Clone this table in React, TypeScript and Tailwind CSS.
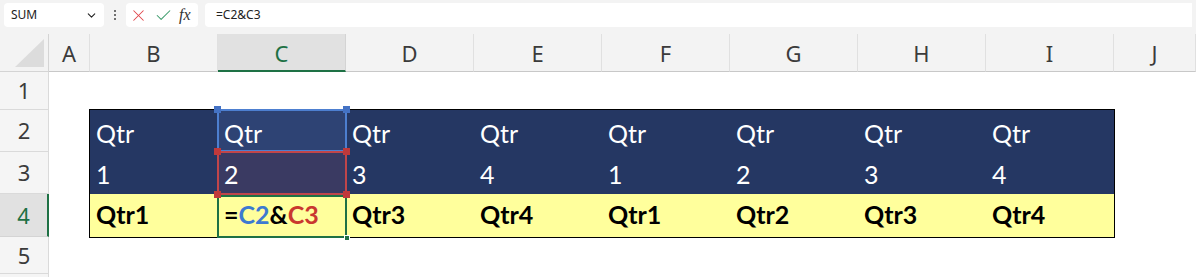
import { ChevronDown, X, Check } from "lucide-react"

const cols = ["A", "B", "C", "D", "E", "F", "G", "H", "I", "J"]
const heads = ["Qtr", "Qtr", "Qtr", "Qtr", "Qtr", "Qtr", "Qtr", "Qtr"]
const nums = ["1", "2", "3", "4", "1", "2", "3", "4"]
const results = ["Qtr1", "", "Qtr3", "Qtr4", "Qtr1", "Qtr2", "Qtr3", "Qtr4"]

const cellFont = { fontFamily: "Lato, 'Liberation Sans', sans-serif" }

function Handle({ className }: { className: string }) {
  return <span className={`absolute z-20 h-[7px] w-[7px] ${className}`} />
}

export default function App() {
  return (
    <div className="h-[277px] w-[1196px] overflow-hidden bg-white" style={{ fontFamily: "'Noto Sans', 'Open Sans', sans-serif" }}>
      {/* formula bar */}
      <div className="flex h-[34px] items-start gap-[7px] bg-[#f3f3f3] px-[4px] pt-[3px]">
        <div className="flex h-[24px] w-[100px] items-center justify-between rounded-[4px] bg-white pl-[7px] pr-[6px] text-[12px] text-[#222]">
          <span>SUM</span>
          <ChevronDown className="h-[13px] w-[13px]" strokeWidth={2} />
        </div>
        <div className="flex h-[24px] w-[8px] flex-col items-center justify-center gap-[2px]">
          <span className="h-[2px] w-[2px] rounded-full bg-[#444]" />
          <span className="h-[2px] w-[2px] rounded-full bg-[#444]" />
          <span className="h-[2px] w-[2px] rounded-full bg-[#444]" />
        </div>
        <div className="flex h-[24px] w-[72px] items-center gap-[6px] rounded-[4px] bg-white pl-[3px]">
          <X className="h-[19px] w-[19px] text-[#e0454a]" strokeWidth={1.3} />
          <Check className="h-[19px] w-[19px] text-[#3a9a6a]" strokeWidth={1.3} />
          <span className="text-[16px] italic text-[#333]" style={{ fontFamily: "'Liberation Serif', serif" }}>fx</span>
        </div>
        <div className="flex h-[24px] flex-1 items-center rounded-l-[4px] bg-white pl-[11px] text-[12px] text-[#222]">
          =C2&amp;C3
        </div>
      </div>

      {/* sheet */}
      <div className="grid grid-cols-[49px_41px_repeat(8,128px)_1fr] grid-rows-[38px_38px_42px_42px_43px_37px_40px]">
        {/* corner */}
        <div className="relative border-b border-r border-[#d4d4d4] bg-[#f3f3f3]">
          <div
            className="absolute bottom-[4px] right-[4px] h-[28px] w-[29px] bg-[#dcdcdc]"
            style={{ clipPath: "polygon(100% 0, 100% 100%, 0 100%)" }}
          />
        </div>
        {cols.map((c) => (
          <div
            key={c}
            className={`flex items-center justify-center border-r pt-[2px] text-[22px] ${
              c === "C"
                ? "border-b-2 border-b-[#1e7145] border-r-[#d4d4d4] bg-[#e1e1e1] text-[#1e7145]"
                : "border-b border-[#c8c8c8] border-r-[#e0e0e0] bg-[#f3f3f3] text-[#3b3b3b]"
            }`}
          >
            {c}
          </div>
        ))}

        {/* row headers */}
        {[1, 2, 3, 4, 5].map((r) => (
          <div
            key={r}
            style={{ gridColumn: 1, gridRow: r + 1 }}
            className={`flex items-center justify-center border-b text-[22px] ${
              r === 4
                ? "border-r-2 border-b-[#d4d4d4] border-r-[#1e7145] bg-[#e1e1e1] text-[#1e7145]"
                : "border-r border-[#dadada] bg-[#f5f5f5] text-[#3b3b3b]"
            }`}
          >
            {r}
          </div>
        ))}
        <div className="col-start-1 row-start-7 border-r border-[#dadada] bg-[#f5f5f5]" />

        {/* data table */}
        <div
          className="col-start-3 col-span-8 row-start-3 row-span-3 grid grid-cols-[repeat(8,128px)] grid-rows-[42px_42px_43px] outline outline-1 outline-black"
          style={cellFont}
        >
          {heads.map((h, i) => (
            <div
              key={"h" + i}
              className={`relative flex items-end pb-[6px] pl-[6px] text-[25px] leading-none text-white ${
                i === 1 ? "bg-[#2e4374]" : "bg-[#253763]"
              }`}
            >
              {h}
              {i === 1 && (
                <>
                  <div className="pointer-events-none absolute z-10 border-2 border-[#4d7fd0]" style={{ inset: "-1px -1px 0 -1px" }} />
                  <Handle className="-left-[4px] -top-[4px] bg-[#4472c4]" />
                  <Handle className="-right-[4px] -top-[4px] bg-[#4472c4]" />
                </>
              )}
            </div>
          ))}
          {nums.map((n, i) => (
            <div
              key={"n" + i}
              className={`relative flex items-end pb-[7px] pl-[6px] text-[25px] leading-none text-white ${
                i === 1 ? "bg-[#3a3a62]" : "bg-[#253763]"
              }`}
            >
              {n}
              {i === 1 && (
                <>
                  <div className="pointer-events-none absolute z-10 border-2 border-[#c0454a]" style={{ inset: "-1px -1px -1px -1px" }} />
                  <Handle className="-left-[4px] -top-[4px] bg-[#c0393b]" />
                  <Handle className="-right-[4px] -top-[4px] bg-[#c0393b]" />
                  <Handle className="-bottom-[4px] -left-[4px] bg-[#c0393b]" />
                  <Handle className="-bottom-[4px] -right-[4px] bg-[#c0393b]" />
                </>
              )}
            </div>
          ))}
          {results.map((t, i) => (
            <div
              key={"r" + i}
              className="relative flex items-end bg-[#ffff9c] pb-[10px] pl-[6px] text-[25px] font-bold leading-none text-black"
            >
              {i === 1 ? (
                <>
                  <span>=</span>
                  <span className="text-[#3d7ad0]">C2</span>
                  <span>&amp;</span>
                  <span className="text-[#c9382f]">C3</span>
                  <div className="pointer-events-none absolute z-10 border-2 border-[#1e7145]" style={{ inset: "1px -1px -1px -1px" }} />
                  <span className="absolute -bottom-[4px] -right-[4px] z-20 h-[6px] w-[6px] border border-white bg-[#1e7145]" />
                </>
              ) : (
                t
              )}
            </div>
          ))}
        </div>
      </div>
    </div>
  )
}
